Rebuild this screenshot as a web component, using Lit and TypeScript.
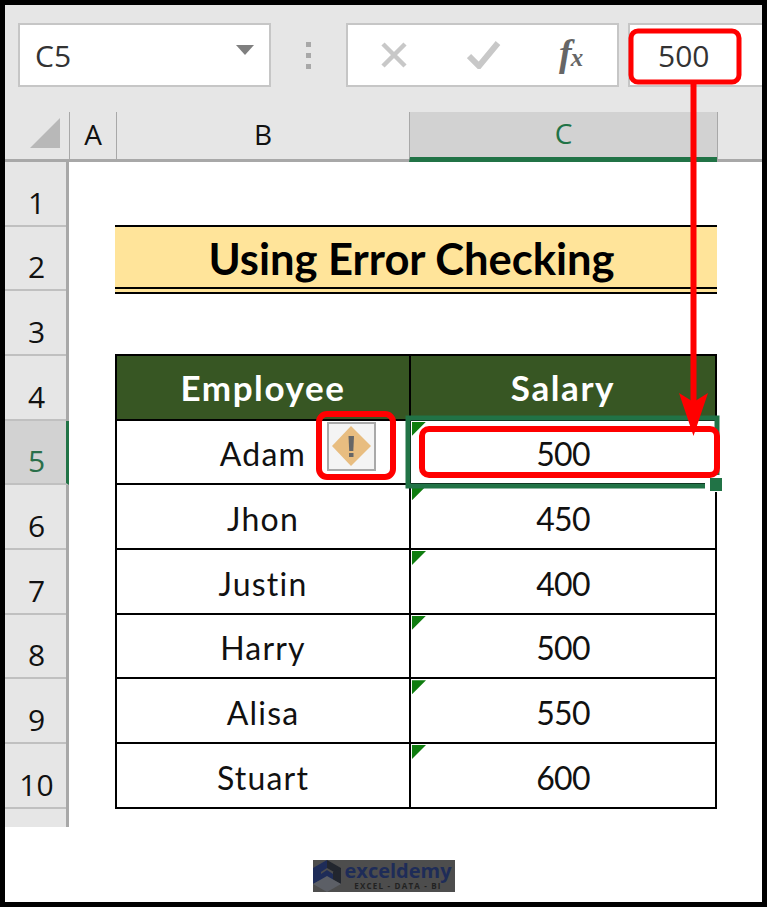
import { LitElement, html, css, svg } from 'lit';
import { customElement } from 'lit/decorators.js';

const people = [
  { name: 'Adam', salary: 500 },
  { name: 'Jhon', salary: 450 },
  { name: 'Justin', salary: 400 },
  { name: 'Harry', salary: 500 },
  { name: 'Alisa', salary: 550 },
  { name: 'Stuart', salary: 600 },
];

const rowNumbers = [1, 2, 3, 4, 5, 6, 7, 8, 9, 10];

@customElement('app-root')
export class AppRoot extends LitElement {
  static styles = css`
    :host {
      display: block;
      font-family: 'Lato', 'Open Sans', sans-serif;
      color: #111;
    }
    .frame {
      position: relative;
      box-sizing: border-box;
      width: 767px;
      height: 907px;
      padding: 5px;
      background: #000;
      overflow: hidden;
    }
    .screen {
      height: 897px;
      background: #fff;
    }
    .toolbar {
      box-sizing: border-box;
      height: 107px;
      padding: 18px 0 0 13px;
      display: flex;
      align-items: flex-start;
      background: #e6e6e6;
    }
    .box {
      box-sizing: border-box;
      height: 64px;
      background: #fff;
      border: 2px solid #c6c6c6;
      display: flex;
      align-items: center;
    }
    .name-box {
      width: 253px;
      padding: 0 15px 0 15px;
      justify-content: space-between;
      font: 30px 'Open Sans', sans-serif;
      color: #333;
    }
    .drop {
      width: 0;
      height: 0;
      border-left: 9px solid transparent;
      border-right: 9px solid transparent;
      border-top: 10px solid #7f7f7f;
      margin-bottom: 10px;
    }
    .grip {
      width: 75px;
      display: flex;
      flex-direction: column;
      align-items: center;
      gap: 6px;
      padding-top: 19px;
    }
    .grip span {
      width: 5px;
      height: 5px;
      background: #a8a8a8;
    }
    .fx-box {
      width: 273px;
      padding-left: 33px;
    }
    .fx-box svg {
      display: block;
    }
    .check {
      margin-left: 60px;
    }
    .fx {
      margin-left: 58px;
      font: italic bold 38px 'Liberation Serif', serif;
      line-height: 38px;
      color: #666;
      letter-spacing: -1px;
    }
    .fx small {
      font-size: 25px;
    }
    .formula {
      flex: 1;
      margin-left: 9px;
      padding-left: 28px;
      border-right: none;
      font: 30px 'Open Sans', sans-serif;
      color: #333;
    }
    .heads {
      height: 50px;
      display: grid;
      grid-template-columns: 64px 47px 293px 308px 1fr;
      background: #e6e6e6;
      font: 28px 'Open Sans', sans-serif;
    }
    .head {
      display: flex;
      align-items: center;
      justify-content: center;
      box-sizing: border-box;
      padding-bottom: 3px;
      border-left: 1px solid #a8a8a8;
      border-bottom: 3px solid #a8a8a8;
    }
    .corner {
      border-left: none;
      padding: 0 0 5px 25px;
      justify-content: flex-start;
    }
    .corner i {
      display: block;
      width: 30px;
      height: 30px;
      background: #b8b8b8;
      clip-path: polygon(100% 0, 100% 100%, 0 100%);
    }
    .head.active {
      background: #d2d2d2;
      color: #217346;
      border-bottom: 5px solid #217346;
    }
    .sheet {
      display: flex;
      height: 665px;
    }
    .gutter {
      box-sizing: border-box;
      width: 64px;
      background: #e6e6e6;
      border-right: 3px solid #a8a8a8;
      display: grid;
      grid-auto-rows: 64.67px;
      font: 30px 'Open Sans', sans-serif;
    }
    .num {
      display: flex;
      align-items: center;
      justify-content: center;
      box-sizing: border-box;
      padding: 18px 0 0 2px;
      border-bottom: 2px solid #c0c0c0;
    }
    .num.active {
      background: #d2d2d2;
      color: #2a6f4a;
      margin-right: -3px;
      border-right: 3px solid #217346;
    }
    .content {
      padding: 63px 0 0 46px;
    }
    .title {
      box-sizing: border-box;
      width: 602px;
      height: 69px;
      padding: 2px 9px 0 0;
      display: flex;
      align-items: center;
      justify-content: center;
      background: #ffe49a;
      border-top: 2px solid #000;
      border-bottom: 7px double #000;
      font-size: 43.5px;
      font-weight: 700;
      color: #000;
    }
    table {
      margin-top: 60px;
      width: 602px;
      table-layout: fixed;
      border-collapse: collapse;
      font-size: 32px;
    }
    th,
    td {
      height: 64.67px;
      padding: 4px 0 0;
      box-sizing: border-box;
      text-align: center;
      border: 2px solid #000;
    }
    th {
      background: #375623;
      color: #fff;
      font-size: 35px;
      font-weight: 700;
      letter-spacing: 1.6px;
      padding: 0;
    }
    th:first-child,
    td:first-child {
      width: 294px;
    }
    td:first-child {
      letter-spacing: 1.2px;
    }
    td.flagged {
      position: relative;
      letter-spacing: -0.8px;
    }
    td.flagged::before {
      content: '';
      position: absolute;
      top: 1px;
      left: 1px;
      width: 14px;
      height: 14px;
      background: #0f7d0f;
      clip-path: polygon(0 0, 100% 0, 0 100%);
    }
    .mark-row {
      display: flex;
      justify-content: center;
      padding-top: 33px;
    }
    .mark {
      box-sizing: border-box;
      width: 142px;
      height: 32px;
      display: flex;
      gap: 4px;
      background: #4d4d4d;
    }
    .mark svg {
      flex: none;
    }
    .mark-text {
      display: flex;
      flex-direction: column;
      align-items: center;
      min-width: 0;
    }
    .mark-name {
      display: block;
      height: 21px;
      font: 700 20px 'Open Sans', sans-serif;
      line-height: 21px;
      color: #1e2c58;
    }
    .mark-sub {
      display: block;
      height: 9px;
      font: 700 8px 'Open Sans', sans-serif;
      line-height: 9px;
      letter-spacing: 1.2px;
      color: #222;
    }
    .overlay {
      position: absolute;
      inset: 0;
      pointer-events: none;
    }
  `;

  private overlay() {
    return svg`
      <!-- selection of C5 -->
      <rect x="408" y="418" width="309" height="68" fill="none" stroke="#217346" stroke-width="5" />
      <rect x="705" y="475" width="18" height="17" fill="#fff" />
      <rect x="710" y="478" width="12" height="13" fill="#217346" />

      <!-- error checking button -->
      <rect x="328" y="423" width="47" height="47" fill="#f4f4f4" stroke="#a9a9a9" stroke-width="2" />
      <path d="M351 426 L371 446 L351 466 L332 446 Z" fill="#e8bd80" />
      <path d="M348.5 436 H354 L353.3 451 H349.2 Z" fill="#666" />
      <rect x="349" y="453" width="4.5" height="4" fill="#666" />

      <!-- red callouts -->
      <rect x="319" y="414" width="74" height="63" rx="8" fill="none" stroke="#f00" stroke-width="6" />
      <rect x="422" y="429" width="295" height="46" rx="7" fill="none" stroke="#f00" stroke-width="6" />
      <rect x="631" y="31" width="108" height="51" rx="7" fill="none" stroke="#f00" stroke-width="5" />
      <rect x="690.5" y="84" width="6" height="325" fill="#f00" />
      <path d="M679 393 L693.5 402 L708 393 L693.5 436 Z" fill="#f00" />
    `;
  }

  render() {
    return html`
      <div class="frame">
        <div class="screen">
          <div class="toolbar">
            <div class="box name-box">C5<span class="drop"></span></div>
            <div class="grip"><span></span><span></span><span></span></div>
            <div class="box fx-box">
              <svg width="26" height="26" viewBox="0 0 26 26">
                <path d="M2 2 L24 24 M24 2 L2 24" stroke="#c8c8c8" stroke-width="4.5" fill="none" />
              </svg>
              <svg class="check" width="34" height="28" viewBox="0 0 34 28">
                <path d="M2 15 L12 25 L31 2" stroke="#c8c8c8" stroke-width="6" fill="none" />
              </svg>
              <span class="fx">f<small>x</small></span>
            </div>
            <div class="box formula">500</div>
          </div>
          <div class="heads">
            <div class="head corner"><i></i></div>
            <div class="head">A</div>
            <div class="head">B</div>
            <div class="head active">C</div>
            <div class="head"></div>
          </div>
          <div class="sheet">
            <div class="gutter">
              ${rowNumbers.map(
                (n) => html`<div class="num ${n === 5 ? 'active' : ''}">${n}</div>`,
              )}
            </div>
            <div class="content">
              <div class="title">Using Error Checking</div>
              <table>
                <tr>
                  <th>Employee</th>
                  <th>Salary</th>
                </tr>
                ${people.map(
                  (p) => html`
                    <tr>
                      <td>${p.name}</td>
                      <td class="flagged">${p.salary}</td>
                    </tr>
                  `,
                )}
              </table>
            </div>
          </div>
          <div class="mark-row">
            <div class="mark">
              <svg width="28" height="32" viewBox="0 0 28 32">
                <path d="M14 0 L28 8 V16 L14 8 Z" fill="#22262e" />
                <path d="M0 8 L14 0 V8 L8 12 V20 L0 24 Z" fill="#1e2c58" />
                <path d="M28 8 V24 L20 20 V12 Z" fill="#22262e" />
                <path d="M8 14 L14 10 L20 14 V20 L14 24 L8 20 Z" fill="#1e2c58" />
                <path d="M0 24 L14 16 L28 24 L14 32 Z" fill="#5c5f66" />
              </svg>
              <div class="mark-text">
                <span class="mark-name">exceldemy</span>
                <span class="mark-sub">EXCEL - DATA - BI</span>
              </div>
            </div>
          </div>
        </div>
        <svg class="overlay" width="767" height="907" viewBox="0 0 767 907">${this.overlay()}</svg>
      </div>
    `;
  }
}
